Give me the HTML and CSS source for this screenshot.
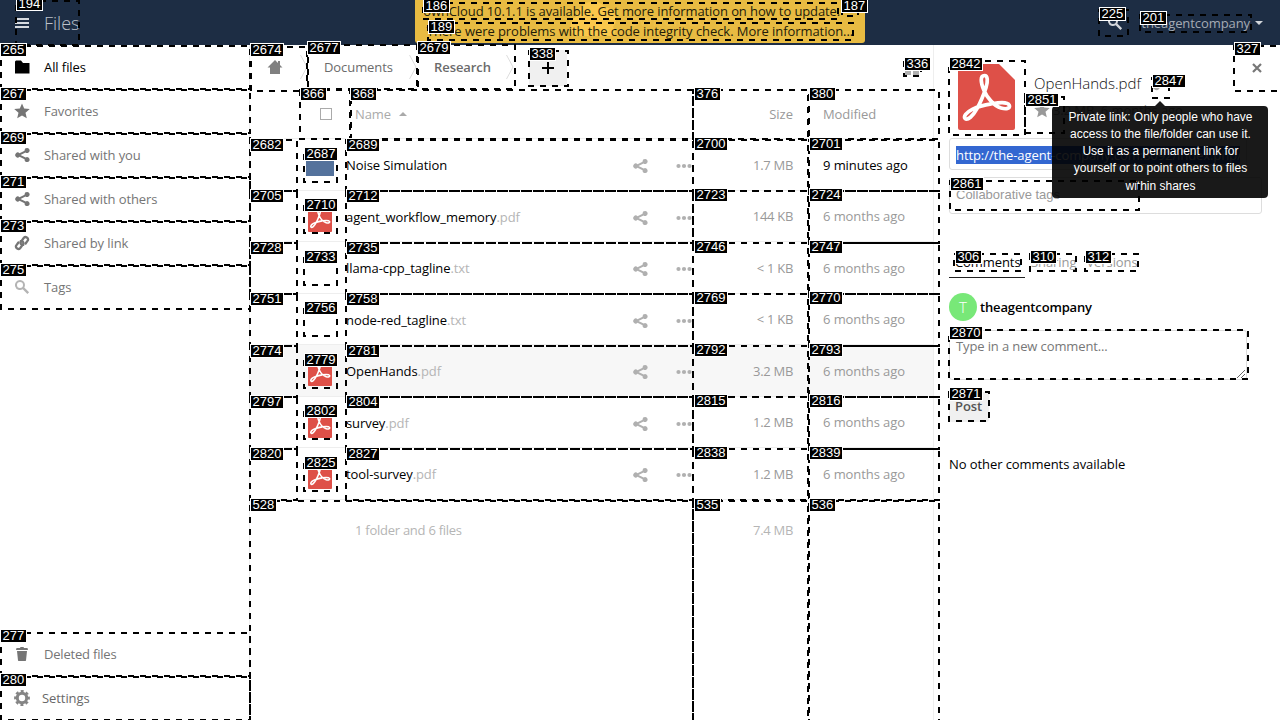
FILE: index.html
```
<!DOCTYPE html>
<html lang="en">
<head>
<meta charset="utf-8">
<title>Files</title>
<link rel="stylesheet" href="styles.css">
</head>
<body>
<svg class="defs" width="0" height="0">
  <symbol id="share" viewBox="0 0 16 16"><path d="M13 1a2.4 2.4 0 0 0-2.4 2.7L5.5 6.2a2.5 2.5 0 1 0 0 3.6l5.1 2.5A2.5 2.5 0 1 0 11.600 10.600L6.500 8.100v-.2l5-2.500A2.500 2.500 0 1 0 13 1z"/></symbol>
  <symbol id="star" viewBox="0 0 16 16"><path d="M8 .4l2.200 5.200 5.600.500-4.300 3.700 1.300 5.500L8 12.400l-4.800 2.900 1.300-5.500L.2 6.100l5.600-.5z"/></symbol>
  <symbol id="search" viewBox="0 0 16 16"><path d="M6 1a5 5 0 1 0 2.700 9.200l4.700 4.700 1.700-1.700-4.800-4.700A5 5 0 0 0 6 1zm0 2a3 3 0 1 1 0 6 3 3 0 0 1 0-6z"/></symbol>
  <symbol id="dots" viewBox="0 0 16 16"><circle cx="2.500" cy="8" r="2.100"/><circle cx="8" cy="8" r="2.100"/><circle cx="13.500" cy="8" r="2.100"/></symbol>
  <symbol id="link" viewBox="0 0 16 16"><g fill="none" stroke="currentColor" stroke-width="2.300" stroke-linecap="round"><path d="M9.200 9.800C7.300 10.200 6 8.500 6.900 6.800l3-4c1.600-1.900 4.900.100 4 2.500l-2.300 3.200"/><path d="M6.800 6.200c1.900-.4 3.200 1.300 2.300 3l-3 4c-1.600 1.900-4.900-.1-4-2.500l2.300-3.200"/></g></symbol>
  <symbol id="pdf" viewBox="0 0 57 66"><path fill="#de5048" d="M2 0h39l16 16v48a2 2 0 0 1-2 2H2a2 2 0 0 1-2-2V2a2 2 0 0 1 2-2z"/><path fill="none" stroke="#fff" stroke-width="3.700" stroke-linejoin="round" d="M26.500 11.500c-4.500 0-4 7-.5 15 3 7 10 15.500 17 17.500 6 1.800 9.500 0 8.300-2.700-2-4-11.500-2.500-18-1.500-7 1-13.500 2.700-19 5.500-6.500 3.200-8.800 7.200-7.300 9.200 2.500 2.500 8-2.500 12-9.800 4-7 7-15 9-21 2-6.500 1.800-12.200-1.500-12.200z"/></symbol>
</svg>

<header class="header">
  <div class="brand"><span class="burger"><i></i><i></i><i></i></span><span>Files</span></div>
  <div class="account"><svg class="icon"><use href="#search"/></svg><span>theagentcompany</span><i class="caret"></i></div>
  <div class="notice">
    <svg class="cloud" width="160" height="40" viewBox="0 0 160 40"><path d="M10 36a12 12 0 0 1 2-20 16 16 0 0 1 28-9 12 12 0 0 1 8 20q5 6-2 9z"/><text x="64" y="26">ownCloud</text></svg>
    <div class="update">ownCloud 10.1.1 is available. Get more information on how to update. <span class="gone">×</span></div><div>There were problems with the code integrity check. More information...</div>
  </div>
</header>

<div class="body">
  <nav class="nav">
    <a class="active"><svg class="icon" viewBox="0 0 16 16"><path d="M1 2.500L2 1.500h5l2 2.500h6.500v10.500H1z"/></svg>All files</a>
    <a><svg class="icon"><use href="#star"/></svg>Favorites</a>
    <a><svg class="icon"><use href="#share"/></svg>Shared with you</a>
    <a><svg class="icon"><use href="#share"/></svg>Shared with others</a>
    <a><svg class="icon"><use href="#link"/></svg>Shared by link</a>
    <a><svg class="icon pale"><use href="#search"/></svg>Tags</a>
    <a class="bottom"><svg class="icon" viewBox="0 0 16 16"><path d="M6.500 1L6 2H2.500L2 4h12l-.5-2H10l-.5-1zM3 5l1 9.500.5.500h7l.5-.5L13 5z"/></svg>Deleted files</a>
    <a class="settings"><svg class="icon" viewBox="0 0 16 16"><circle cx="8" cy="8" r="4.700" fill="none" stroke="currentColor" stroke-width="3"/><circle cx="8" cy="8" r="6.600" fill="none" stroke="currentColor" stroke-width="2.600" stroke-dasharray="2.900 2.280" stroke-dashoffset="1.450"/></svg>Settings</a>
  </nav>

  <main class="main">
    <div class="crumbs">
      <span class="crumb home"><svg class="icon" viewBox="0 0 16 16"><path d="M8 1L.5 8.500H3V15h10V8.500h2.500L13 6V2h-2v2z"/></svg></span>
      <svg class="chev" viewBox="0 0 8 24"><path d="M.5 0L7 12 .5 24"/></svg>
      <span class="crumb docs">Documents</span>
      <svg class="chev" viewBox="0 0 8 24"><path d="M.5 0L7 12 .5 24"/></svg>
      <span class="crumb res">Research</span>
      <svg class="chev" viewBox="0 0 8 24"><path d="M.5 0L7 12 .5 24"/></svg>
      <span class="add"><svg width="12" height="12"><path d="M5 0h2v5h5v2H7v5H5V7H0V5h5z"/></svg></span>
      <svg class="view" width="16" height="16" viewBox="0 0 16 16"><path d="M1 1h6v4H1zM9 1h6v4H9zM1 6h6v4H1zM9 6h6v4H9zM1 11h6v4H1zM9 11h6v4H9z"/></svg>
    </div>
    <div class="row head"><span class="thumb"><i class="check"></i></span><span class="name">Name <i class="up"></i></span><span class="size">Size</span><span class="date">Modified</span></div>
    <div id="rows"></div>
    <div class="row foot"><span class="thumb"></span><span class="name">1 folder and 6 files</span><span class="size">7.4 MB</span><span class="date"></span></div>
  </main>

  <aside class="details">
    <span class="close"><svg width="10" height="10"><path d="M1 1l8 8M9 1L1 9"/></svg></span>
    <div class="file">
      <svg class="bigpdf"><use href="#pdf"/></svg>
      <div class="fileinfo">
        <div class="title">OpenHands.pdf <svg class="icon"><use href="#link"/></svg></div>
        <div class="meta"><svg class="icon"><use href="#star"/></svg>3.2 MB, 6 months ago</div>
      </div>
    </div>
    <div class="url"><span>http://the-agent-company.com:8092/index.php/</span></div>
    <div class="tags">Collaborative tags</div>
    <div class="tabs"><span class="on">Comments</span><span>Sharing</span><span>Versions</span></div>
    <div class="author"><span class="avatar">T</span><b>theagentcompany</b></div>
    <div class="comment">Type in a new comment...<svg width="8" height="8"><path d="M0 8L8 0M4 8L8 4"/></svg></div>
    <div class="post">Post</div>
    <div class="none">No other comments available</div>
    <div class="tooltip">Private link: Only people who have<br>access to the file/folder can use it.<br>Use it as a permanent link for<br>yourself or to point others to files<br>within shares</div>
  </aside>
</div>

<svg class="marks" id="marks" width="1280" height="720"></svg>
<script src="app.js"></script>
</body>
</html>
```

FILE: styles.css
```
* { box-sizing: border-box; }
body { margin: 0; width: 1280px; height: 720px; overflow: hidden; background: #fff; color: #000; font: 13px/20px "Open Sans", "Noto Sans", sans-serif; letter-spacing: -.08px; }
svg { display: block; flex: none; }
.defs { position: absolute; }
.icon { width: 16px; height: 16px; fill: currentColor; }

.header { position: relative; height: 45px; background: #1d2d44; display: flex; justify-content: space-between; align-items: center; padding: 0 17px 0 15px; }
.brand { display: flex; align-items: center; gap: 15px; color: #bcc1c9; font-size: 18px; font-weight: 300; letter-spacing: 0; }
.burger { display: grid; gap: 2px; width: 14px; margin-top: 1px; }
.burger i { height: 2px; background: #d6dae0; }
.account { display: flex; align-items: center; color: #a5abb4; }
.account .icon { margin-right: 18px; color: #d2d5da; }
.caret { border: 4px solid transparent; border-top-color: #d2d5da; border-bottom: 0; margin-left: 5px; }
.notice { position: absolute; left: 415px; top: 0; width: 450px; height: 43px; padding-top: 1px; background: #e8bb42; border-radius: 0 0 3px 3px; text-align: center; color: #231c0a; white-space: nowrap; letter-spacing: -.06px; }
.notice div { position: relative; }
.notice .update { letter-spacing: -.1px; left: -3px; }
.cloud { position: absolute; left: 150px; top: 0; fill: #fac84c; font-size: 17px; }
.cloud text { fill: #eec14a; }
.gone { color: #e8bb42; }

.body { display: flex; height: 675px; }
.nav { width: 250px; border-right: 1px solid #eee; display: flex; flex-direction: column; }
.nav a { height: 44px; display: flex; align-items: center; gap: 14px; padding-left: 14px; color: #757575; }
.nav .active { color: #000; }
.nav .pale { color: #b4b4b4; }
.nav .bottom { margin-top: auto; letter-spacing: -.2px; }
.nav .settings { gap: 12px; color: #686868; }
.nav .settings .icon { color: #858585; }

.main { width: 683px; }
.crumbs { height: 45px; display: flex; align-items: center; padding-bottom: 1px; color: #6b6b6b; }
.home { width: 50px; padding-left: 17px; }
.home .icon { color: #808080; }
.docs { width: 101px; padding-left: 16px; }
.res { width: 89px; padding-left: 17px; font-weight: 600; }
.chev { width: 8px; height: 24px; fill: none; stroke: #ddd; }
.add { display: grid; place-items: center; width: 38px; height: 36px; margin: 2px 0 0 15px; background: #f0f0f0; border-radius: 3px; }
.view { margin: 2px 13px 0 auto; fill: #b0b0b0; }
.row { display: flex; align-items: center; height: 51.500px; border-bottom: 1px solid #eee; color: #999; }
.row.sel { background: #f7f7f7; }
.row.head { height: 49px; }
.thumb { width: 96px; padding-left: 54px; }
.name { width: 347px; display: flex; align-items: center; white-space: pre; color: #000; }
.name em { font-style: normal; color: #b5b5b5; }
.name .icon { color: #b0b0b0; }
.name .s { margin-left: auto; margin-right: 28px; margin-top: 2px; }
.name .d { margin-top: 2px; }
.size { width: 100px; text-align: right; letter-spacing: -.3px; }
.date { padding-left: 30px; }
.date.recent { color: #000; }
#rows .name { position: relative; padding: 2px 1px 0 0; margin-right: 0; }
#rows .thumb, #rows .size, #rows .date { padding-top: 1px; }
#rows .thumb { padding-top: 2px; }
.head .size { letter-spacing: 0; }
.head .thumb { padding-left: 70px; }
.head .name, .foot .name { width: 347px; padding-left: 9px; color: #aaa; }
.foot { height: 60px; border: 0; color: #b5b5b5; }
.foot .name { color: #b5b5b5; letter-spacing: -.26px; }
.check { display: block; width: 12px; height: 12px; border: 1px solid #aaa; }
.up { border: 4px solid transparent; border-bottom-color: #aaa; border-top: 0; margin-left: 5px; }
.folder { width: 32px; height: 32px; }
.pdficon { width: 24px; height: 28px; margin: 2px 0 0 4px; }

.details { position: relative; width: 347px; border-left: 1px solid #eee; padding-left: 15px; }
.close { position: absolute; right: 18px; top: 18px; }
.close path { stroke: #777; stroke-width: 2.200; }
.file { display: flex; padding: 19px 0 0 9px; height: 93px; }
.bigpdf { width: 57px; height: 66px; }
.fileinfo { padding: 8px 0 0 19px; }
.title { display: flex; align-items: center; gap: 11px; font-size: 15px; font-weight: 300; line-height: 22px; letter-spacing: 0; color: #111; }
.title .icon { color: #aaa; }
.meta { display: flex; align-items: center; gap: 3px; margin-top: 6px; color: #999; }
.url { width: 298px; height: 32px; border: 1px solid #ddd; border-radius: 3px; padding: 7px 6px; overflow: hidden; white-space: nowrap; }
.url span { display: block; height: 18px; line-height: 19px; background: #3367d1; color: #fff; overflow: hidden; }
.tags { width: 313px; height: 37px; margin-top: 7px; padding: 7px 6px; border: 1px solid #ddd; border-radius: 3px; color: #999; font-family: "Liberation Sans", Arial, sans-serif; letter-spacing: 0; }
.tabs { display: flex; gap: 3px; margin-top: 33px; color: #999; }
.tabs span { height: 31px; padding: 5px 4px 0 3px; }
.tabs .on { width: 76px; padding-left: 6px; color: #000; border-bottom: 1px solid #222; }
.author { display: flex; align-items: center; gap: 3px; margin-top: 15px; }
.author b { font-weight: 600; letter-spacing: -.15px; }
.avatar { width: 28px; height: 28px; border-radius: 50%; background: #78e878; color: #fff; font-size: 15px; font-weight: 300; line-height: 28px; text-align: center; }
.comment { display: flex; align-items: flex-start; justify-content: space-between; width: 298px; height: 50px; margin-top: 9px; padding: 5px 1px 1px 6px; border: 1px solid #ddd; border-radius: 3px; color: #777; letter-spacing: -.12px; }
.comment svg { align-self: flex-end; fill: none; stroke: #666; }
.post { width: 40px; height: 30px; margin-top: 12px; padding: 4px 6px; background: #f0f0f0; border-radius: 3px; font-weight: 600; color: #555; }
.none { margin-top: 32px; }
.tooltip { position: absolute; left: 118px; top: 61px; width: 216px; height: 92px; padding: 3px 0 0 1px; border-radius: 4px; background: rgba(0,0,0,.9); color: #fff; text-align: center; font: 12px/17.140px "Liberation Sans", Arial, sans-serif; letter-spacing: 0; }
.tooltip::before { content: ""; position: absolute; left: 103px; top: -5px; border: 5px solid transparent; border-top: 0; border-bottom-color: rgba(0,0,0,.9); }

.marks { position: absolute; left: 0; top: 0; font: 13px "Liberation Sans", Arial, sans-serif; letter-spacing: 0; }
.marks .box { fill: none; stroke: #000; stroke-width: 2; stroke-dasharray: 6 6; }
.marks .tag { fill: #000; stroke: #fff; stroke-width: 1; }
.marks text { fill: #fff; }
```

FILE: app.js
```
const files = [
  ["Noise Simulation", "", "1.7 MB", "9 minutes ago", "folder"],
  ["agent_workflow_memory", ".pdf", "144 KB", "6 months ago", "pdf"],
  ["llama-cpp_tagline", ".txt", "< 1 KB", "6 months ago", ""],
  ["node-red_tagline", ".txt", "< 1 KB", "6 months ago", ""],
  ["OpenHands", ".pdf", "3.2 MB", "6 months ago", "pdf"],
  ["survey", ".pdf", "1.2 MB", "6 months ago", "pdf"],
  ["tool-survey", ".pdf", "1.2 MB", "6 months ago", "pdf"]
];
const thumbs = {
  folder: '<svg class="folder" viewBox="0 0 32 32"><path fill="#54729c" d="M2 4q0-1 1-1h10l4 4h12q1 0 1 1v19H2z"/></svg>',
  pdf: '<svg class="pdficon"><use href="#pdf"/></svg>',
  "": ""
};
document.getElementById("rows").innerHTML = files.map(([name, ext, size, date, kind]) =>
  `<div class="row${name === "OpenHands" ? " sel" : ""}"><span class="thumb">${thumbs[kind]}</span>` +
  `<span class="name">${name}<em>${ext}</em><svg class="icon s"><use href="#share"/></svg><svg class="icon d"><use href="#dots"/></svg></span>` +
  `<span class="size">${size.replace("<", "&lt;")}</span><span class="date${kind === "folder" ? " recent" : ""}">${date}</span></div>`
).join("");

// [label, left, top, right, bottom, label x, label y]
const marks = [
  [194, 15, 0, 80, 46, 17, -2], [186, 422, 2, 839, 20, 424, 0], [187, 841, 0, 859, 17, 842, 0],
  [189, 427, 22, 854, 41, 429, 21], [225, 1098, 9, 1129, 37, 1100, 8], [201, 1139, 14, 1252, 33, 1141, 12],
  [265, 0, 45, 251, 90, 1, 44], [267, 0, 89, 251, 134, 1, 88], [269, 0, 133, 251, 178, 1, 132],
  [271, 0, 177, 251, 222, 1, 176], [273, 0, 221, 251, 266, 1, 220], [275, 0, 265, 251, 310, 1, 264],
  [277, 0, 632, 251, 677, 1, 630], [280, 0, 676, 251, 721, 1, 674],
  [2674, 250, 46, 308, 92, 251, 44], [2677, 307, 44, 418, 90, 308, 42], [2679, 417, 44, 516, 90, 418, 42],
  [338, 528, 50, 569, 87, 530, 48], [336, 903, 58, 922, 77, 905, 58], [327, 1233, 45, 1282, 92, 1235, 43],
  [366, 299, 89, 351, 140, 301, 88], [368, 350, 89, 694, 140, 351, 88],
  [376, 692, 89, 809, 140, 695, 88], [380, 808, 89, 940, 140, 810, 88],
  [2842, 948, 60, 1026, 136, 950, 58], [2847, 1151, 77, 1170, 99, 1153, 75], [2851, 1024, 96, 1065, 134, 1026, 94],
  [2861, 949, 180, 1140, 211, 951, 178], [306, 953, 253, 1022, 272, 956, 251], [310, 1029, 253, 1077, 272, 1031, 251],
  [312, 1084, 253, 1139, 272, 1086, 251], [2870, 948, 329, 1249, 380, 950, 327], [2871, 948, 391, 990, 422, 950, 388],
  [528, 249, 500, 694, 760, 251, 499], [535, 692, 500, 809, 760, 695, 499], [536, 808, 500, 940, 760, 810, 499]
];
const ids = [
  [2682, 2687, 2689, 2700, 2701], [2705, 2710, 2712, 2723, 2724], [2728, 2733, 2735, 2746, 2747],
  [2751, 2756, 2758, 2769, 2770], [2774, 2779, 2781, 2792, 2793], [2797, 2802, 2804, 2815, 2816],
  [2820, 2825, 2827, 2838, 2839]
];
ids.forEach((r, i) => {
  const y = Math.floor(139.2 + i * 51.5), b = Math.floor(190.700 + i * 51.5) + 2;
  marks.push([r[0], 249, y, 298, b, 251, y], [r[1], 303, y + 10, 338, y + 44, 305, y + 9],
    [r[2], 345, y, 694, b, 347, y], [r[3], 692, y, 809, b, 695, y - 1], [r[4], 808, y, 940, b, 810, y - 1]);
});
const boxes = marks.map(([, x, y, r, b]) => `<rect class="box" x="${x + 1}" y="${y + 1}" width="${r - x - 2}" height="${b - y - 2}"/>`);
const tags = marks.map(([id, , , , , x, y]) => {
  const w = String(id).length * 7.23 + 3.500;
  return `<rect class="tag" x="${x - .5}" y="${y - .5}" width="${Math.round(w) + 1}" height="13"/><text x="${x + 1.500}" y="${y + 10}">${id}</text>`;
});
document.getElementById("marks").innerHTML = boxes.join("") + tags.join("");
```
